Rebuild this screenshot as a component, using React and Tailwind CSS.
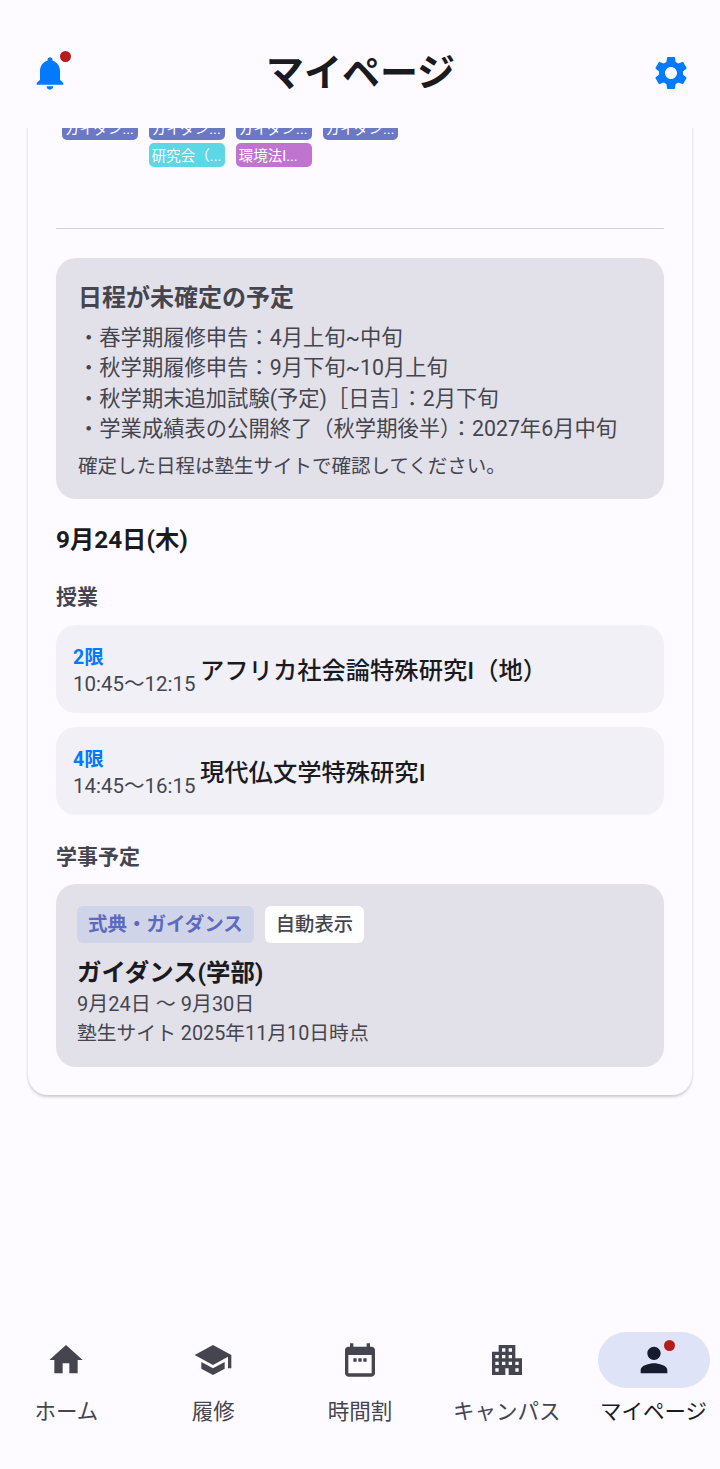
import React from 'react';
import { MdNotifications, MdSettings, MdHome, MdSchool, MdApartment, MdPerson } from 'react-icons/md';

const font = { fontFamily: '"Roboto", "Noto Sans CJK JP", sans-serif' };

const CalendarIcon = ({ className }) => (
  <svg viewBox="0 0 24 24" className={className} fill="currentColor">
    <path d="M19 4h-1V2h-2v2H8V2H6v2H5c-1.1 0-2 .9-2 2v14c0 1.1.9 2 2 2h14c1.1 0 2-.9 2-2V6c0-1.100-.9-2-2-2zm0 16H5V9h14v11zM8 11h2v2H8v-2zm3 0h2v2h-2v-2zm3 0h2v2h-2v-2z" />
  </svg>
);

const Chip = ({ color, children }) => (
  <div className={`ml-[6px] mr-[5px] h-[24px] rounded-[5px] ${color} pl-[3px] text-[14.500px] leading-[27px] text-white whitespace-nowrap overflow-hidden`}>
    {children}
  </div>
);

const ClassCard = ({ period, time, title }) => (
  <div className="flex h-[87.700px] items-center rounded-[20px] bg-[#f0f0f6] pl-[17px]">
    <div className="mr-[4px] w-[123px] shrink-0 pt-[4px]">
      <div className="text-[19.500px] leading-[27px] font-bold text-[#007aff]">{period}</div>
      <div className="text-[20.500px] leading-[27px] text-[#45454f] whitespace-nowrap">{time}</div>
    </div>
    <div className="text-[24.300px] leading-[32px] font-medium text-[#1a1a1f] mt-[5px]">{title}</div>
  </div>
);

const navItems = [
  { label: 'ホーム', Icon: MdHome },
  { label: '履修', Icon: MdSchool },
  { label: '時間割', Icon: CalendarIcon },
  { label: 'キャンパス', Icon: MdApartment },
];

const App = () => {
  return (
    <div style={font} className="flex h-[1469px] w-[720px] flex-col overflow-hidden bg-[#fdfbff]">
      {/* header */}
      <header className="flex h-[128px] shrink-0 items-center justify-between pl-[30px] pr-[30px] pt-[17px]">
        <div className="relative h-[40px] w-[40px]">
          <MdNotifications className="h-[40px] w-[40px] text-[#007aff]" />
          <span className="absolute left-[30px] top-[-2px] h-[11px] w-[11px] rounded-full bg-[#b71c1c]" />
        </div>
        <h1 className="text-[38px] leading-[48px] font-bold text-[#1a1a1f]">マイページ</h1>
        <MdSettings className="h-[40px] w-[40px] text-[#007aff] -mr-[1px]" />
      </header>

      <main className="min-h-0 flex-1 overflow-hidden">
        <div className="mx-[28px] -mt-[12px] rounded-b-[20px] bg-[#fdfbff] px-[28px] pb-[28px] shadow-[0_2px_3px_rgba(0,0,0,0.2)]">
          {/* calendar tail */}
          <div className="grid grid-cols-7 gap-y-[3px]">
            <Chip color="bg-[#6b78c6]">ガイダン...</Chip>
            <Chip color="bg-[#6b78c6]">ガイダン...</Chip>
            <Chip color="bg-[#6b78c6]">ガイダン...</Chip>
            <Chip color="bg-[#6b78c6]">ガイダン...</Chip>
            <div className="col-span-3" />
            <div />
            <Chip color="bg-[#5dd6e6]">研究会（...</Chip>
            <Chip color="bg-[#bf75cf]">環境法I...</Chip>
          </div>

          <div className="mt-[61px] h-px bg-[#d2d1da]" />

          {/* undecided */}
          <section className="mt-[29px] h-[241px] rounded-[20px] bg-[#e2e1ea] pl-[22px] pt-[24px] text-[#45454f]">
            <h2 className="text-[24px] leading-[32px] font-bold">日程が未確定の予定</h2>
            <ul className="mt-[9px] text-[21.300px] leading-[30.400px]">
              <li>・春学期履修申告：4月上旬~中旬</li>
              <li>・秋学期履修申告：9月下旬~10月上旬</li>
              <li>・秋学期末追加試験(予定)［日吉］：2月下旬</li>
              <li>・学業成績表の公開終了（秋学期後半）：2027年6月中旬</li>
            </ul>
            <p className="mt-[7px] text-[19.500px] leading-[30px]">確定した日程は塾生サイトで確認してください。</p>
          </section>

          <h2 className="mt-[24px] text-[24.300px] leading-[34px] font-bold text-[#1a1a1f]">9月24日(木)</h2>

          <h3 className="mt-[25px] text-[21px] leading-[30px] font-bold text-[#45454f]">授業</h3>
          <div className="mt-[13px] flex flex-col gap-[14.400px]">
            <ClassCard period="2限" time="10:45〜12:15" title="アフリカ社会論特殊研究I（地）" />
            <ClassCard period="4限" time="14:45〜16:15" title="現代仏文学特殊研究I" />
          </div>

          <h3 className="mt-[27px] text-[21px] leading-[30px] font-bold text-[#45454f]">学事予定</h3>
          <section className="mt-[12.500px] h-[182.500px] rounded-[20px] bg-[#e2e1ea] pl-[21px] pt-[21.500px]">
            <div className="flex gap-[11px]">
              <span className="h-[37px] rounded-[6px] bg-[#d0d4e8] px-[11px] text-[19.500px] leading-[37px] font-bold text-[#5c6bc0]">式典・ガイダンス</span>
              <span className="h-[37px] rounded-[6px] bg-white px-[11px] text-[19.300px] leading-[37px] font-medium text-[#45454f]">自動表示</span>
            </div>
            <div className="mt-[13px] text-[24.400px] leading-[33px] font-bold text-[#1a1a1f]">ガイダンス(学部)</div>
            <div className="text-[20px] leading-[30px] text-[#45454f]">9月24日 〜 9月30日</div>
            <div className="text-[19.800px] leading-[30px] text-[#45454f]">塾生サイト 2025年11月10日時点</div>
          </section>
        </div>
      </main>

      {/* bottom nav */}
      <nav className="-mx-[7px] grid h-[149px] shrink-0 grid-cols-5 pt-[12px]">
        {navItems.map(({ label, Icon }) => (
          <div key={label} className="flex flex-col items-center text-[#45454f]">
            <div className="flex h-[56px] items-center justify-center">
              <Icon className="h-[40px] w-[40px]" />
            </div>
            <div className="mt-[9px] text-[21.500px] leading-[30px] whitespace-nowrap">{label}</div>
          </div>
        ))}
        <div className="flex flex-col items-center text-[#1a1a1f]">
          <div className="relative flex h-[56px] w-[112px] items-center justify-center rounded-full bg-[#dfe3f8]">
            <MdPerson className="h-[40px] w-[40px] text-[#161b2e]" />
            <span className="absolute left-[66px] top-[8px] h-[11px] w-[11px] rounded-full bg-[#b71c1c]" />
          </div>
          <div className="mt-[9px] text-[21.500px] leading-[30px] whitespace-nowrap">マイページ</div>
        </div>
      </nav>
    </div>
  );
};

export default App;
